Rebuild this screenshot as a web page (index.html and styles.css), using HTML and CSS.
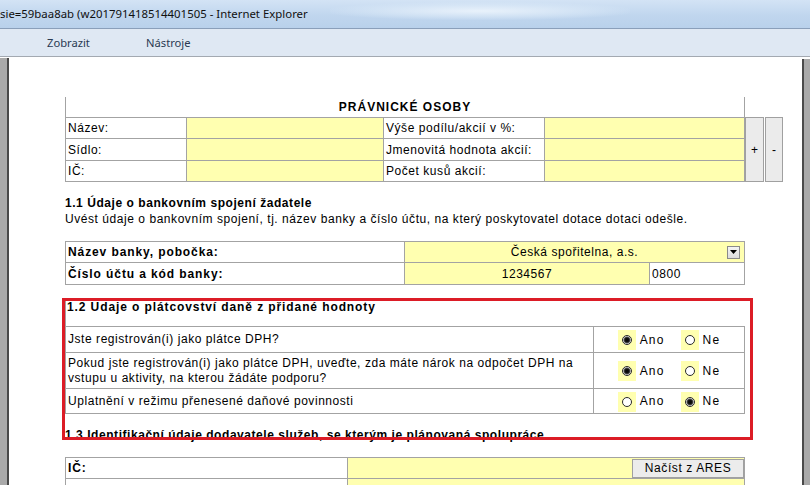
FILE: index.html
```html
<!DOCTYPE html>
<html lang="cs">
<head>
<meta charset="utf-8">
<title>Internet Explorer</title>
<link rel="stylesheet" href="styles.css">
</head>
<body>
<div class="titlebar"><span class="title">sie=59baa8ab (w201791418514401505 - Internet Explorer</span><span class="glow"></span></div>
<div class="menubar"><span class="mi mi1">Zobrazit</span><span class="mi">Nástroje</span></div>
<div class="viewport">
  <div class="frame-left"></div>
  <div class="content">
    <div class="page">
      <div class="po">
        <div class="po-grid">
          <div class="po-head">PRÁVNICKÉ OSOBY</div>
          <div class="c r1">Název:</div><div class="c inp r1"></div><div class="c r1">Výše podílu/akcií v %:</div><div class="c inp r1"></div>
          <div class="c r2">Sídlo:</div><div class="c inp r2"></div><div class="c r2">Jmenovitá hodnota akcií:</div><div class="c inp r2"></div>
          <div class="c r3">IČ:</div><div class="c inp r3"></div><div class="c r3">Počet kusů akcií:</div><div class="c inp r3"></div>
        </div>
        <div class="po-btns"><div class="pbtn plus">+</div><div class="pbtn minus">-</div></div>
      </div>

      <h2 class="sec sec1">1.1 Údaje o bankovním spojení žadatele</h2>
      <p class="desc">Uvést údaje o bankovním spojení, tj. název banky a číslo účtu, na který poskytovatel dotace dotaci odešle.</p>

      <div class="bank">
        <div class="b lbl">Název banky, pobočka:</div>
        <div class="b inp span2 sel"><span class="sel-sp"></span><span class="sel-val">Česká spořitelna, a.s.</span><span class="sel-btn"><svg width="7" height="4" viewBox="0 0 7 4"><path d="M0 0h7L3.5 4z" fill="#000"/></svg></span></div>
        <div class="b lbl">Číslo účtu a kód banky:</div>
        <div class="b inp center">1234567</div>
        <div class="b">0800</div>
      </div>

      <div class="vat">
        <div class="vat-head">1.2 Udaje o plátcovství daně z přidané hodnoty</div>
        <div class="v q q1">Jste registrován(i) jako plátce DPH?</div>
        <div class="v opts q1"><span class="rb"><span class="radio on"></span></span><span class="rl">Ano</span><span class="rb"><span class="radio"></span></span><span class="rl">Ne</span></div>
        <div class="v q q2">Pokud jste registrován(i) jako plátce DPH, uveďte, zda máte nárok na odpočet DPH na vstupu u aktivity, na kterou žádáte podporu?</div>
        <div class="v opts q2"><span class="rb"><span class="radio on"></span></span><span class="rl">Ano</span><span class="rb"><span class="radio"></span></span><span class="rl">Ne</span></div>
        <div class="v q q3">Uplatnění v režimu přenesené daňové povinnosti</div>
        <div class="v opts q3"><span class="rb"><span class="radio"></span></span><span class="rl">Ano</span><span class="rb"><span class="radio on"></span></span><span class="rl">Ne</span></div>
      </div>

      <h2 class="sec sec3">1.3 Identifikační údaje dodavatele služeb, se kterým je plánovaná spolupráce</h2>

      <div class="ident">
        <div class="i lbl">IČ:</div>
        <div class="i inp ares-cell"><span class="ares">Načíst z ARES</span></div>
        <div class="i"></div>
        <div class="i inp"></div>
      </div>

      <div class="redbox"></div>
    </div>
  </div>
  <div class="frame-right"></div>
</div>
</body>
</html>
```
FILE: styles.css
```css
* { box-sizing: border-box; margin: 0; padding: 0; }
html, body { width: 810px; height: 485px; overflow: hidden; background: #fff; }
body { font-family: "Liberation Sans", Arial, sans-serif; font-size: 12px; color: #000; }

.titlebar {
  position: relative;
  height: 29px;
  display: flex;
  align-items: center;
  background: linear-gradient(180deg, #d3e3f5 0%, #c0d6ee 55%, #b9d1eb 100%);
  border-bottom: 1px solid #8a9fba;
  font-family: "Noto Sans", "Open Sans", sans-serif;
  font-size: 11.4px;
  color: #101010;
  overflow: hidden;
}
.title { position: relative; z-index: 1; padding-bottom: 1px; }
.glow {
  position: absolute;
  left: 330px; top: 2px;
  width: 300px; height: 18px;
  background: radial-gradient(ellipse at center, rgba(236,244,252,0.9) 0%, rgba(220,234,248,0.5) 50%, rgba(200,220,242,0) 75%);
}

.menubar {
  height: 28px;
  display: flex;
  align-items: center;
  padding-left: 47px;
  background: #dfe8f3;
  border-bottom: 1px solid #a3a9b1;
  font-family: "Noto Sans", "Open Sans", sans-serif;
  font-size: 11.2px;
  color: #2a3a52;
}
.mi1 { width: 99px; }

.viewport { display: flex; height: 428px; }
.frame-left { width: 9px; background: #aaaaaa; border-right: 2px solid #4a4a4a; margin-top: 1px; }
.frame-right { width: 8px; background: #a9a9a9; border-left: 2px solid #4a4a4a; margin-top: 2px; }
.content { flex: 1; background: #fff; overflow: hidden; }

.page { position: relative; padding: 40px 0 0 56px; letter-spacing: 0.55px; }

/* Právnické osoby */
.po { display: flex; align-items: flex-end; }
.po-grid {
  display: grid;
  grid-template-columns: 121px 197px 161px 200px;
  grid-template-rows: 21px 21px 22px 21px;
  border-left: 1px solid #a3a3a3;
}
.po-head {
  grid-column: 1 / 5;
  border-right: 1px solid #a3a3a3;
  border-bottom: 1px solid #a3a3a3;
  font-weight: bold;
  text-align: center;
  line-height: 20px;
  letter-spacing: 1px;
}
.c {
  border-right: 1px solid #a3a3a3;
  border-bottom: 1px solid #a3a3a3;
  padding-left: 2px;
  display: flex;
  align-items: center;
}
.inp { background: #ffffb0; }

.po-btns { display: flex; height: 65px; margin-left: 0; }
.pbtn {
  width: 19px;
  background: #ebebeb;
  border: 1px solid #a0a0a0;
  display: flex;
  align-items: center;
  justify-content: center;
  font-size: 12px;
  letter-spacing: 0;
}
.minus { width: 18px; margin-left: 1px; }

/* sections */
.sec { font-size: 12px; font-weight: bold; line-height: 16px; }
.sec1 { margin-top: 13px; }
.desc { line-height: 16px; }

/* bank */
.bank {
  margin-top: 14px;
  display: grid;
  grid-template-columns: 339px 245px 95px;
  grid-template-rows: 21px 22px;
  border-left: 1px solid #a3a3a3;
  border-top: 1px solid #a3a3a3;
  width: 680px;
}
.b {
  border-right: 1px solid #a3a3a3;
  border-bottom: 1px solid #a3a3a3;
  padding-left: 2px;
  display: flex;
  align-items: center;
}
.lbl { font-weight: bold; letter-spacing: 0.9px; }
.span2 { grid-column: 2 / 4; }
.center { justify-content: center; padding-left: 0; }
.sel { padding-left: 0; }
.sel-sp { width: 17px; }
.sel-val { flex: 1; text-align: center; }
.sel-btn {
  width: 13px; height: 13px;
  margin-right: 4px;
  background: linear-gradient(#f4f4f4, #dcdcdc);
  border: 1px solid #8a8a8a;
  display: flex; align-items: center; justify-content: center;
}

/* VAT */
.vat {
  margin-top: 14px;
  display: grid;
  grid-template-columns: 528px 151px;
  grid-template-rows: 28px 26px 36px 25px;
  border-left: 1px solid #a3a3a3;
  width: 680px;
}
.vat-head {
  grid-column: 1 / 3;
  font-weight: bold;
  letter-spacing: 0.9px;
  line-height: 15px;
  padding: 1px 0 0 1px;
  border-bottom: 1px solid #a3a3a3;
}
.v {
  border-right: 1px solid #a3a3a3;
  border-bottom: 1px solid #a3a3a3;
  padding-left: 2px;
  display: flex;
  align-items: center;
  line-height: 15px;
}
.opts { justify-content: center; padding-left: 0; padding-top: 1px; }
.rb {
  width: 18px; height: 20px;
  background: #ffffb0;
  display: flex; align-items: center; justify-content: center;
}
.rl { margin-left: 4px; margin-right: 16px; letter-spacing: 1.2px; }
.rl:last-child { margin-right: 0; }
.radio {
  width: 10px; height: 10px;
  border-radius: 50%;
  border: 1px solid #2a2a2a;
  background: #fff;
}
.radio.on { background: radial-gradient(circle, #000 0, #111 2px, #555 3px, #fff 4px); }

.sec3 { margin-top: 14px; line-height: 15px; }

/* ident */
.ident {
  margin-top: 14px;
  display: grid;
  grid-template-columns: 282px 397px;
  grid-template-rows: 21px 21px;
  border-left: 1px solid #a3a3a3;
  border-top: 1px solid #a3a3a3;
  width: 680px;
}
.i {
  border-right: 1px solid #a3a3a3;
  border-bottom: 1px solid #a3a3a3;
  padding-left: 2px;
  display: flex;
  align-items: center;
}
.ares-cell { justify-content: flex-end; padding: 1px 0 1px 0; }
.ares {
  width: 112px; height: 19px;
  background: #ececec;
  border: 1px solid #a0a0a0;
  display: flex; align-items: center; justify-content: center;
  letter-spacing: 0.6px;
}

.redbox {
  position: absolute;
  left: 53px; top: 241px;
  width: 691px; height: 142px;
  border: 3px solid #dc1c26;
  pointer-events: none;
}
```
